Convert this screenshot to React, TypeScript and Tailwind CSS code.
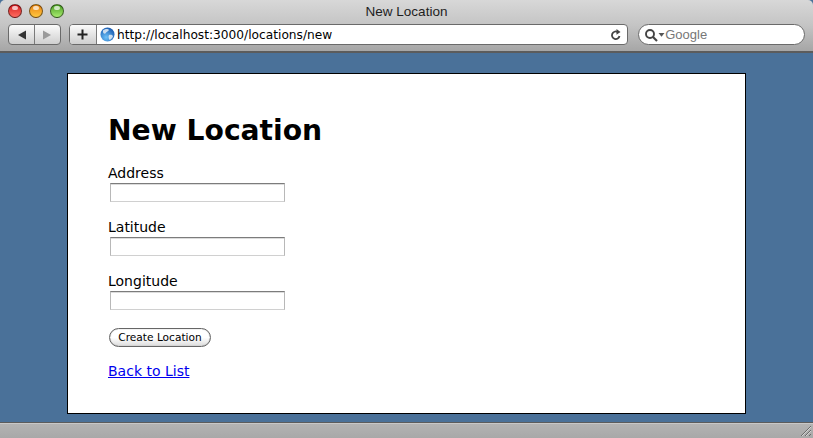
import React from 'react'

const font = { dejavu: "font-['DejaVu_Sans',sans-serif]" }

const Light = ({ className }: { className: string }) => (
  <div className={`relative h-[14px] w-[14px] rounded-full border border-black/50 ${className}`}>
    <div className="absolute left-[3px] top-[1px] h-[4px] w-[6px] rounded-full bg-white/70" />
  </div>
)

const Field = ({ label }: { label: string }) => (
  <div className="mb-[17px]">
    <div className="h-[18px] text-[14px] leading-[16px] text-black">{label}</div>
    <div className="ml-[2px] h-[19px] w-[175px] border border-[#d0d0d0] border-t-[#7c7c7c] border-x-[#b8b8b8] bg-white shadow-[inset_0_1px_0_#dcdcdc]" />
  </div>
)

export default function App() {
  return (
    <div className={`flex h-[438px] w-[813px] flex-col overflow-hidden bg-[#4a7199] ${font.dejavu}`}>
      {/* Barre de titre + outils */}
      <div className="flex h-[53px] flex-col rounded-t-[5px] border-b-2 border-[#5c5c5c] bg-gradient-to-b from-[#d8d8d8] via-[#c4c4c4] to-[#a6a6a6]">
        <div className="relative flex h-[24px] shrink-0 items-center justify-center">
          <div className="absolute left-[8px] top-[4px] flex gap-[7px]">
            <Light className="bg-gradient-to-b from-[#d5101c] to-[#ff6a60]" />
            <Light className="bg-gradient-to-b from-[#e88208] to-[#ffc840]" />
            <Light className="bg-gradient-to-b from-[#4aa020] to-[#a8ec70]" />
          </div>
          <span className="font-['Liberation_Sans',sans-serif] text-[13.5px] text-[#1e1e1e]">New Location</span>
        </div>
        <div className="flex h-[21px] items-center pl-[8px] pr-[8px]">
          {/* Précédent / suivant */}
          <div className="flex h-[21px] w-[53px] overflow-hidden rounded-[4px] border border-[#6a6a6a] bg-gradient-to-b from-[#fbfbfb] to-[#cfcfcf]">
            <div className="flex w-[26px] items-center justify-center border-r border-[#7a7a7a]">
              <svg width="10" height="10" viewBox="0 0 10 10"><path d="M1 5 L9 0.5 V9.5 Z" fill="#333" /></svg>
            </div>
            <div className="flex flex-1 items-center justify-center">
              <svg width="10" height="10" viewBox="0 0 10 10"><path d="M9 5 L1 0.5 V9.5 Z" fill="#9a9a9a" /></svg>
            </div>
          </div>
          {/* Ajouter + adresse */}
          <div className="ml-[8px] flex h-[21px] w-[560px] overflow-hidden rounded-[4px] border border-[#6a6a6a] bg-white">
            <div className="flex w-[27px] items-center justify-center border-r border-[#7a7a7a] bg-gradient-to-b from-[#fbfbfb] to-[#cfcfcf]">
              <svg width="11" height="11" viewBox="0 0 11 11"><path d="M5.5 0.5 V10.5 M0.5 5.5 H10.5" stroke="#222" strokeWidth="2" /></svg>
            </div>
            <div className="flex flex-1 items-center pl-[3px] pr-[5px]">
              <svg width="15" height="15" viewBox="0 0 15 15" className="shrink-0">
                <defs>
                  <radialGradient id="globe" cx="0.4" cy="0.7" r="0.8">
                    <stop offset="0" stopColor="#6cc0f8" />
                    <stop offset="1" stopColor="#0f4fa8" />
                  </radialGradient>
                </defs>
                <circle cx="7.5" cy="7.5" r="7" fill="url(#globe)" />
                <path d="M3 3.5 C5 1.5 8 1.5 9 3 C8 5 6 4.5 5.5 6.5 C4 7 2.5 6 3 3.5 Z M9 8 C11 7.5 13 8 13 9.5 C12 12 10 13 9 12.5 C9 11 8 9.5 9 8 Z" fill="#e6edf5" opacity="0.85" />
              </svg>
              <span className="ml-[2px] flex-1 pt-[1px] text-[12.2px] text-black">http://localhost:3000/locations/new</span>
              <svg width="12" height="12" viewBox="0 0 12 12">
                <path d="M9.5 7 A3.8 3.8 0 1 1 7.5 2.9" fill="none" stroke="#444" strokeWidth="1.8" />
                <path d="M6.5 0 L10.5 3 L6.5 5.8 Z" fill="#444" />
              </svg>
            </div>
          </div>
          {/* Recherche */}
          <div className="ml-[10px] flex h-[21px] w-[167px] items-center rounded-full border border-[#6a6a6a] bg-white pl-[5px]">
            <svg width="21" height="14" viewBox="0 0 21 14">
              <circle cx="6" cy="6" r="4" fill="none" stroke="#444" strokeWidth="1.9" />
              <path d="M9 9 L13 13" stroke="#444" strokeWidth="2.2" />
              <path d="M14.5 5 H20.5 L17.5 8.8 Z" fill="#555" />
            </svg>
            <span className="pt-[1px] font-['Liberation_Sans',sans-serif] text-[13px] text-[#777]">Google</span>
          </div>
        </div>
      </div>

      {/* Contenu */}
      <div className="flex-1 px-[67px] pt-[20px]">
        <div className="h-[341px] w-[679px] border border-black bg-white pl-[40px] pt-[39px]">
          <h1 className="mb-[16px] h-[36px] text-[28.2px] font-bold leading-[36px] text-black">New Location</h1>
          <Field label="Address" />
          <Field label="Latitude" />
          <Field label="Longitude" />
          <button className="ml-[1px] mt-[18px] block h-[19px] w-[102px] rounded-full border border-[#666666] bg-gradient-to-b from-white via-white to-[#dcdcdc] text-[10.6px] leading-[17px] text-black shadow-[inset_0_0_1px_#888888]">
            Create Location
          </button>
          <a href="#" className="mt-[15px] block w-fit text-[14px] leading-[18px] text-[#0000ee] underline">
            Back to List
          </a>
        </div>
      </div>

      {/* Barre d'état */}
      <div className="relative h-[16px] shrink-0 border-t border-[#5c5c5c] bg-gradient-to-b from-[#b4b4b4] to-[#a8a8a8] shadow-[inset_0_1px_0_#c8c8c8]">
        <svg width="12" height="12" viewBox="0 0 12 12" className="absolute bottom-[1px] right-[1px]">
          <path d="M1 11 L11 1 M5 11 L11 5 M9 11 L11 9" stroke="#6a6a6a" strokeWidth="1" />
          <path d="M2 11 L11 2 M6 11 L11 6" stroke="#e0e0e0" strokeWidth="0.8" />
        </svg>
      </div>
    </div>
  )
}
